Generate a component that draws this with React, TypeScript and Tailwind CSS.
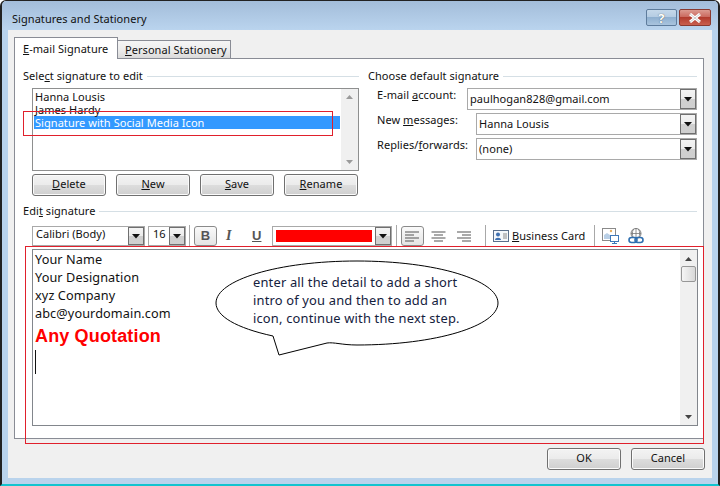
import type { ReactNode } from "react";

const font = "font-['Noto_Sans','Liberation_Sans',sans-serif] text-[11px] leading-[14px] text-[#111] tracking-[0.05px]";
const btnClass =
  "flex h-[22px] w-[74px] items-center justify-center rounded-[3px] border border-[#707070] pb-[2px] bg-[linear-gradient(#f3f3f3_0%,#ebebeb_50%,#dddddd_50%,#cfcfcf_100%)] shadow-[inset_0_0_0_1px_#fbfbfb]";

const Arrow = () => (
  <svg width="8" height="5" viewBox="0 0 8 5">
    <path d="M0 0h8L4 4.500z" fill="#111" />
  </svg>
);

const Combo = ({ text, className, color, textClass }: { text?: string; className: string; color?: boolean; textClass?: string }) => (
  <div className={`flex items-stretch border border-[#a9a9a9] bg-white ${className}`}>
    <div className={`flex min-w-0 flex-1 items-center overflow-hidden whitespace-nowrap pl-[2px] ${textClass ?? ""}`}>
      {color ? <div className="ml-[1px] h-[12px] w-[96px] bg-[#ff0000]" /> : text}
    </div>
    <div className="flex w-[16px] items-center justify-center border border-[#6f6f6f] bg-[linear-gradient(#f4f4f4_0%,#ececec_50%,#d0d0d0_50%,#cfcfcf_100%)]">
      <Arrow />
    </div>
  </div>
);

const GroupLabel = ({ children, className }: { children: ReactNode; className?: string }) => (
  <div className={`flex items-center ${className ?? ""}`}>
    <span>{children}</span>
    <div className="ml-[4px] h-[1px] flex-1 bg-[#d5dfe5]" />
  </div>
);

const ToolSep = ({ className }: { className?: string }) => <div className={`h-[22px] w-[1px] bg-[#a8a8a8] ${className ?? ""}`} />;

const ToggleBox = ({ children, className }: { children: ReactNode; className?: string }) => (
  <div className={`flex h-[20px] w-[23px] items-center justify-center rounded-[3px] border border-[#8a8a8a] bg-[linear-gradient(#fafafa,#e4e4e4)] ${className ?? ""}`}>
    {children}
  </div>
);

const AlignIcon = ({ mode }: { mode: "left" | "center" | "right" }) => {
  const rows = [14, 9, 14, 9];
  return (
    <svg width="15" height="11" viewBox="0 0 15 11">
      {rows.map((w, i) => {
        const x = mode === "left" ? 0 : mode === "center" ? (15 - w) / 2 : 15 - w;
        return <rect key={i} x={x} y={i * 3 + 0.500} width={w} height="1" fill="#555" />;
      })}
    </svg>
  );
};

const PushButton = ({ children, className }: { children: ReactNode; className?: string }) => (
  <div className={`${btnClass} ${className ?? ""}`}>{children}</div>
);

export default function App() {
  return (
    <div className={`relative h-[486px] w-[720px] overflow-hidden rounded-t-[6px] border-x-2 border-t border-[#222] border-b-2 border-b-[#12c4cf] bg-[#b9d3ec] ${font}`}>
      {/* title bar */}
      <div className="flex h-[29px] items-center justify-between bg-[linear-gradient(#a3bdda,#bad4ee)] pl-[10px] pr-[7px]">
        <span className="mt-[7px]">Signatures and Stationery</span>
        <div className="mt-[4px] flex gap-[2px]">
          <div className="flex h-[17px] w-[31px] items-center justify-center rounded-[2px] border border-[#5e7c9c] bg-[linear-gradient(#c5d8ea_0%,#b3cbe2_50%,#8fb0d0_50%,#a9c4de_100%)] text-[13px] font-bold text-white [text-shadow:0_0_1px_#333]">
            ?
          </div>
          <div className="flex h-[17px] w-[32px] items-center justify-center rounded-[2px] border border-[#8a3a30] bg-[linear-gradient(#dc9a90_0%,#c9655a_50%,#b23c2e_50%,#c9604f_100%)]">
            <svg width="14" height="10" viewBox="0 0 14 10">
              <path d="M2 1l10 8M12 1L2 9" stroke="#fff" strokeWidth="3" />
              <path d="M2 1l10 8M12 1L2 9" stroke="#555" strokeWidth="0.300" />
            </svg>
          </div>
        </div>
      </div>

      {/* client area */}
      <div className="mx-[6px] h-[448px] bg-[#f0f0f0] pl-[6px] pt-[7px]">
        {/* tabs */}
        <div className="flex h-[21px] items-end">
          <div className="z-10 mb-[-1px] h-[22px] w-[104px] whitespace-nowrap border border-b-0 border-[#898c95] bg-white pl-[8px] pt-[4px]">
            <u>E</u>-mail Signature
          </div>
          <div className="ml-[-1px] h-[18px] w-[114px] whitespace-nowrap border border-b-0 border-[#898c95] bg-[linear-gradient(#f5f5f5_0%,#ededed_50%,#dadada_100%)] pl-[7px] pt-[2px]">
            <u>P</u>ersonal Stationery
          </div>
        </div>

        {/* tab panel */}
        <div className="h-[381px] w-[690px] border border-[#898c95] bg-white pl-[8px] pt-[10px]">
          <div className="flex h-[135px]">
            <div className="w-[336px]">
              <GroupLabel>
                Sele<u>c</u>t signature to edit
              </GroupLabel>
              <div className="ml-[9px] mt-[5px] flex h-[83px] w-[327px] border border-[#8e8f8f] bg-white pl-[1px] pt-[1px]">
                <div className="flex-1 pr-[1px]">
                  <div className="h-[13px] pl-[1px]">Hanna Lousis</div>
                  <div className="h-[13px] pl-[1px]">James Hardy</div>
                  <div className="h-[13px] bg-[#3399ff] pl-[1px] leading-[13px] text-white">Signature with Social Media Icon</div>
                </div>
                <div className="mt-[-1px] flex w-[17px] flex-col items-center justify-between bg-[#f0f0f0] py-[6px]">
                  <svg width="7" height="4" viewBox="0 0 7 4"><path d="M0 4h7L3.500 0z" fill="#9a9a9a" /></svg>
                  <svg width="7" height="4" viewBox="0 0 7 4"><path d="M0 0h7L3.500 4z" fill="#9a9a9a" /></svg>
                </div>
              </div>
              <div className="ml-[9px] mt-[3px] flex gap-[10px]">
                <PushButton><span><u>D</u>elete</span></PushButton>
                <PushButton><span><u>N</u>ew</span></PushButton>
                <PushButton><span><u>S</u>ave</span></PushButton>
                <PushButton><span><u>R</u>ename</span></PushButton>
              </div>
            </div>
            <div className="ml-[9px] w-[329px]">
              <GroupLabel>Choose default signature</GroupLabel>
              <div className="mt-[5px] flex h-[22px] items-start pl-[9px]">
                <span className="w-[90px] whitespace-nowrap">E-mail <u>a</u>ccount:</span>
                <Combo text="paulhogan828@gmail.com" className="h-[22px] w-[230px]" />
              </div>
              <div className="mt-[3px] flex h-[22px] items-start pl-[9px]">
                <span className="w-[99px] whitespace-nowrap">New <u>m</u>essages:</span>
                <Combo text="Hanna Lousis" className="h-[22px] w-[221px]" />
              </div>
              <div className="mt-[3px] flex h-[22px] items-start pl-[9px]">
                <span className="w-[99px] whitespace-nowrap">Replies/<u>f</u>orwards:</span>
                <Combo text="(none)" className="h-[22px] w-[221px]" />
              </div>
            </div>
          </div>

          {/* edit signature */}
          <GroupLabel className="w-[674px]">
            Edi<u>t</u> signature
          </GroupLabel>
          <div className="ml-[9px] mt-[7px] flex h-[22px] items-center">
            <Combo text="Calibri (Body)" textClass="pb-[4px]" className="h-[20px] w-[113px] pl-[1px]" />
            <Combo text="16" textClass="pb-[4px]" className="ml-[3px] h-[20px] w-[38px] pl-[2px]" />
            <ToolSep className="ml-[3px]" />
            <ToggleBox className="ml-[4px]"><span className="font-['Liberation_Sans'] text-[13px] font-bold text-[#555]">B</span></ToggleBox>
            <span className="ml-[9px] w-[12px] font-['Liberation_Serif'] text-[14px] font-bold italic text-[#555]">I</span>
            <span className="ml-[14px] w-[12px] font-['Liberation_Sans'] text-[13px] font-bold text-[#555] underline">U</span>
            <Combo color className="ml-[8px] h-[20px] w-[120px]" />
            <ToolSep className="ml-[4px]" />
            <ToggleBox className="ml-[4px]"><AlignIcon mode="left" /></ToggleBox>
            <div className="ml-[7px] w-[15px]"><AlignIcon mode="center" /></div>
            <div className="ml-[10px] w-[15px]"><AlignIcon mode="right" /></div>
            <ToolSep className="ml-[14px]" />
            <svg className="ml-[7px]" width="16" height="12" viewBox="0 0 16 12">
              <rect x="0.500" y="0.500" width="15" height="11" fill="#f4f7fb" stroke="#5a6f8c" />
              <circle cx="5" cy="4.500" r="2" fill="#3f70b0" />
              <path d="M2 10c0-3 6-3 6 0z" fill="#3f70b0" />
              <path d="M10 4h4M10 6h4M10 8h4" stroke="#8a8a8a" />
            </svg>
            <span className="ml-[3px] mt-[-1px] w-[78px] whitespace-nowrap"><u>B</u>usiness Card</span>
            <ToolSep className="ml-[4px]" />
            <svg className="ml-[7px]" width="17" height="16" viewBox="0 0 17 16">
              <rect x="0.500" y="0.500" width="13" height="12" fill="#fff" stroke="#8a8a8a" />
              <path d="M2 11V7l3-2 3 2v4z" fill="#b9cfe6" />
              <circle cx="9" cy="3" r="1.200" fill="#e8b060" />
              <rect x="8.500" y="7.500" width="8" height="6" fill="#fff" stroke="#3f78b8" />
              <path d="M12.500 13.500v2M10 15.500h5" stroke="#3f78b8" />
            </svg>
            <svg className="ml-[9px]" width="17" height="17" viewBox="0 0 17 17">
              <circle cx="8" cy="5.500" r="5" fill="none" stroke="#777" />
              <path d="M8 .5v10M3 5.500h10M5.500 1c-1.500 3-1.500 6 0 9M10.500 1c1.500 3 1.500 6 0 9" stroke="#777" fill="none" strokeWidth="0.800" />
              <rect x="1" y="9.500" width="8" height="5" rx="2.500" fill="#fff" stroke="#2f6fb0" strokeWidth="1.600" />
              <rect x="7" y="9.500" width="8" height="5" rx="2.500" fill="none" stroke="#2f6fb0" strokeWidth="1.600" />
            </svg>
          </div>

          <div className="ml-[9px] mt-[2px] flex h-[177px] w-[666px] border border-[#82868c] bg-white">
            <div className="flex-1 pl-[2px] text-[12.700px] leading-[18px] tracking-[0.100px]">
              <div>Your Name</div>
              <div>Your Designation</div>
              <div>xyz Company</div>
              <div>abc@yourdomain.com</div>
              <div className="mt-[2px] font-['Liberation_Sans'] text-[18px] font-bold leading-[24px] tracking-[0.150px] text-[#ff0000]">Any Quotation</div>
              <div className="mt-[2px] h-[24px] w-[1px] bg-[#111]" />
            </div>
            <div className="flex w-[17px] flex-col items-center bg-[#f0f0f0] pb-[6px] pt-[7px]">
              <svg width="7" height="4" viewBox="0 0 7 4"><path d="M0 4h7L3.500 0z" fill="#444" /></svg>
              <div className="ml-[-1px] mt-[5px] h-[16px] w-[15px] rounded-[2px] border border-[#979797] bg-[linear-gradient(90deg,#f5f5f5,#d8d8d8)]" />
              <svg className="mt-auto" width="7" height="4" viewBox="0 0 7 4"><path d="M0 0h7L3.500 4z" fill="#444" /></svg>
            </div>
          </div>
        </div>

        {/* dialog buttons */}
        <div className="ml-[533px] mt-[9px] flex gap-[10px]">
          <PushButton>OK</PushButton>
          <PushButton>Cancel</PushButton>
        </div>
      </div>

      {/* annotations drawn over the dialog */}
      <div className="absolute left-[21px] top-[110px] h-[25px] w-[310px] border border-[#e0202c]" />
      <div className="absolute left-[23px] top-[245px] h-[198px] w-[679px] border border-[#e0202c]" />
      <svg className="absolute left-[210px] top-[257px]" width="290" height="100" viewBox="0 0 290 100">
        <path
          d="M61 78C24 70 4 58 4 45C4 22 66 3 145 3C224 3 286 22 286 45C286 68 224 87 145 87C130 87 122 84 115 85L67 97z"
          fill="#fff"
          stroke="#000"
        />
      </svg>
      <div className="absolute left-[251px] top-[272px] w-[240px] text-[12.900px] leading-[18px] tracking-[0.180px] text-[#14213d]">
        enter all the detail to add a short
        <br />
        intro of you and then to add an
        <br />
        icon, continue with the next step.
      </div>
    </div>
  );
}
